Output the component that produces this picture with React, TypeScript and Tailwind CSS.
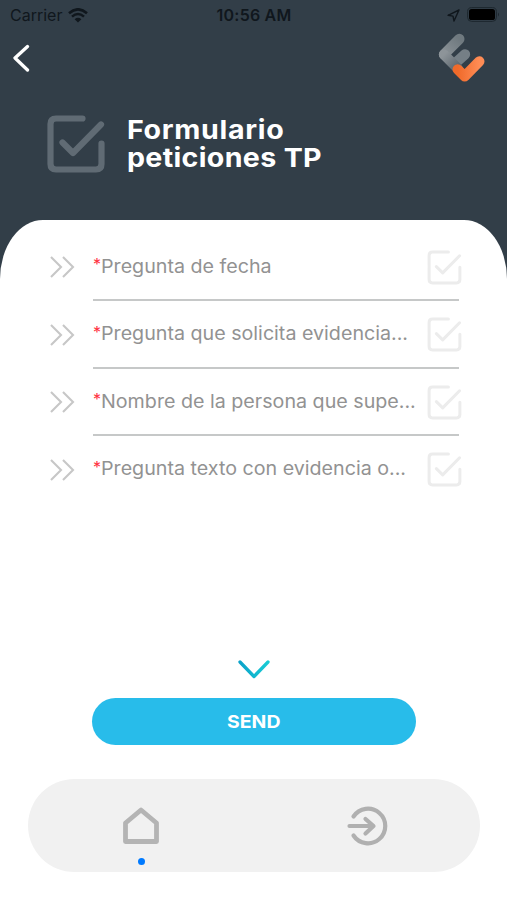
import type { ReactNode } from "react";

const questions = [
  { id: 1, label: "Pregunta de fecha" },
  { id: 2, label: "Pregunta que solicita evidencia..." },
  { id: 3, label: "Nombre de la persona que supe..." },
  { id: 4, label: "Pregunta texto con evidencia o..." },
];

function CheckSquare({ className, strokeWidth }: { className: string; strokeWidth: number }) {
  return (
    <svg
      viewBox="0 0 58 58"
      className={className}
      fill="none"
      stroke="currentColor"
      strokeWidth={strokeWidth}
      strokeLinecap="round"
      strokeLinejoin="round"
    >
      <path d="M35.500 3.500H9Q3.500 3.500 3.500 9V49Q3.500 54.500 9 54.500H49Q54.500 54.500 54.500 49V28.500" />
      <path d="M15.500 27.500L26 38L54 9.500" />
    </svg>
  );
}

function StatusBar() {
  return (
    <div className="grid h-[30px] grid-cols-3 items-center pl-[10px] pr-[7px] text-[16px] text-[#10171d]">
      <div className="flex items-center gap-[6px]">
        <span>Carrier</span>
        <svg viewBox="0 0 20 15" className="h-[15px] w-5" fill="none" stroke="currentColor">
          <path d="M1 5.200Q10-2.600 19 5.200" strokeWidth="2.600" />
          <path d="M4 8.600Q10 3.400 16 8.600" strokeWidth="2.500" />
          <path d="M6.600 11.200Q10 8.400 13.400 11.200L10 14.600Z" fill="currentColor" stroke="none" />
        </svg>
      </div>
      <span className="-ml-[2px] whitespace-nowrap text-center font-semibold tracking-[0.2px]">10:56 AM</span>
      <div className="flex items-center justify-end gap-[7px]">
        <svg viewBox="0 0 13 13" className="h-[13px] w-[13px]" fill="none" stroke="currentColor" strokeWidth="1.400" strokeLinejoin="round">
          <path d="M12 1L1 6.300L6 7.100L7 12Z" />
        </svg>
        <svg viewBox="0 0 33 15" className="-mt-px h-[15px] w-[33px]">
          <rect x="0.600" y="0.600" width="28.800" height="13.800" rx="4" fill="none" stroke="#1d272e" />
          <rect x="2" y="2" width="26" height="11" rx="2.600" fill="#000" />
          <path d="M31 5.500Q33 7.500 31 9.500Z" fill="#1d272e" />
        </svg>
      </div>
    </div>
  );
}

function Logo() {
  return (
    <svg
      viewBox="0 0 138 144"
      className="h-12 w-[46px] overflow-visible"
      fill="none"
      strokeWidth="31"
      strokeLinecap="round"
      strokeLinejoin="round"
    >
      <defs>
        <linearGradient id="upper" x1="0" y1="1" x2="1" y2="0">
          <stop offset="0" stopColor="#8b9297" />
          <stop offset="1" stopColor="#6f797f" />
        </linearGradient>
        <linearGradient id="lower" x1="0" y1="0" x2="1" y2="1">
          <stop offset="0" stopColor="#8d9499" />
          <stop offset="1" stopColor="#5b656d" />
        </linearGradient>
        <linearGradient id="tick" x1="0" y1="0" x2="1" y2="0">
          <stop offset="0" stopColor="#f06a2a" />
          <stop offset="1" stopColor="#ff8c55" />
        </linearGradient>
      </defs>
      <path d="M46 90L78 61" stroke="#757f86" />
      <path d="M61 15L15 61" stroke="url(#upper)" />
      <path d="M15 62L56 103" stroke="url(#lower)" />
      <path d="M56 106L77 127L121 82" stroke="url(#tick)" />
    </svg>
  );
}

function QuestionRow({ children, last }: { children: ReactNode; last: boolean }) {
  return (
    <div className="flex h-[67.500px] pl-[50px]">
      <svg viewBox="0 0 25 22" className="mt-[22.500px] h-[22px] w-[25px] shrink-0" fill="none" stroke="#c7c7c7" strokeWidth="2.100">
        <path d="M1 1L11 11L1 21M13 1L23 11L13 21" />
      </svg>
      <div className={`ml-[18px] flex w-[366px] justify-between ${last ? "" : "border-b-2 border-[#c6c8c8]"}`}>
        {children}
      </div>
    </div>
  );
}

export default function App() {
  return (
    <div className="flex h-[900px] w-[507px] flex-col overflow-hidden bg-white font-['Inter',sans-serif]">
      <header className="h-[280px] shrink-0 bg-[#323e48]">
        <StatusBar />
        <div className="flex h-[54px] items-start justify-between pl-3 pr-[22px]">
          <svg viewBox="0 0 18 28" className="mt-[14px] h-7 w-[18px]" fill="none" stroke="white" strokeWidth="3.300" strokeLinecap="round" strokeLinejoin="round">
            <path d="M15.500 2.500L3 14L15.500 26" />
          </svg>
          <button className="mt-1">
            <Logo />
          </button>
        </div>
        <div className="flex items-start pl-[47px] pt-[31px]">
          <CheckSquare className="h-[58px] w-[58px] text-[#606b74]" strokeWidth={6.2} />
          <h1 className="ml-[22px] mt-px origin-left scale-x-[1.1] text-[26px] font-bold leading-7 text-white">
            <span className="block tracking-[0.6px]">Formulario</span>
            <span className="block tracking-[0.3px]">peticiones TP</span>
          </h1>
        </div>
      </header>

      <main className="relative -mt-[60px] flex h-[559px] shrink-0 flex-col rounded-t-[43px_59px] bg-white pt-[13.500px]">
        {questions.map((q, i) => (
          <QuestionRow key={q.id} last={i === questions.length - 1}>
            <p className="mt-[19px] flex whitespace-nowrap text-[18.500px] leading-[26px] text-[#929292]">
              <span className="-mt-[1.500px] w-[8px] text-[16px] text-[#ff3040]">*</span>
              <span className="origin-left scale-x-[1.063]">{q.label}</span>
            </p>
            <CheckSquare className="-mr-[3px] mt-4 h-[35px] w-[35px] shrink-0 text-[#ececec]" strokeWidth={5} />
          </QuestionRow>
        ))}

        <div className="mt-auto flex flex-col items-center pb-[34px]">
          <svg viewBox="0 0 32 19" className="h-[19px] w-8" fill="none" strokeWidth="3.300" strokeLinecap="round" strokeLinejoin="round">
            <defs>
              <linearGradient id="chevron" x1="0" y1="0" x2="1" y2="0">
                <stop offset="0" stopColor="#0ba3ca" />
                <stop offset="1" stopColor="#18cbd4" />
              </linearGradient>
            </defs>
            <path d="M2 2L16 16.500L30 2" stroke="url(#chevron)" />
          </svg>
          <button className="mt-[19px] h-[47px] w-[324px] rounded-full bg-[#28bcea] text-[18px] font-bold text-white">
            <span className="inline-block scale-x-[1.08]">SEND</span>
          </button>
        </div>
      </main>

      <nav className="mx-auto grid h-[93px] w-[452px] shrink-0 grid-cols-2 rounded-full bg-[#f1f1f1]">
        <button className="flex flex-col items-center pt-7">
          <svg viewBox="0 0 38 38" className="h-[38px] w-[38px]" fill="none" stroke="#b4b4b4" strokeWidth="4.800" strokeLinejoin="round">
            <path d="M3.500 16L19 3L34.500 16V34.500H3.500Z" />
          </svg>
          <span className="ml-px mt-[13px] h-[7px] w-[7px] rounded-full bg-[#007aff]" />
        </button>
        <button className="flex justify-center pt-7">
          <svg viewBox="0 0 40 40" className="h-10 w-10 overflow-visible" fill="none" stroke="#b0b0b0" strokeWidth="4.200" strokeLinecap="round" strokeLinejoin="round">
            <path d="M6.500 9.500A17.300 17.300 0 1 1 6.500 28.500" />
            <path d="M2.500 19H26M18.500 12L26.500 19L18.500 26.500" />
          </svg>
        </button>
      </nav>
    </div>
  );
}
